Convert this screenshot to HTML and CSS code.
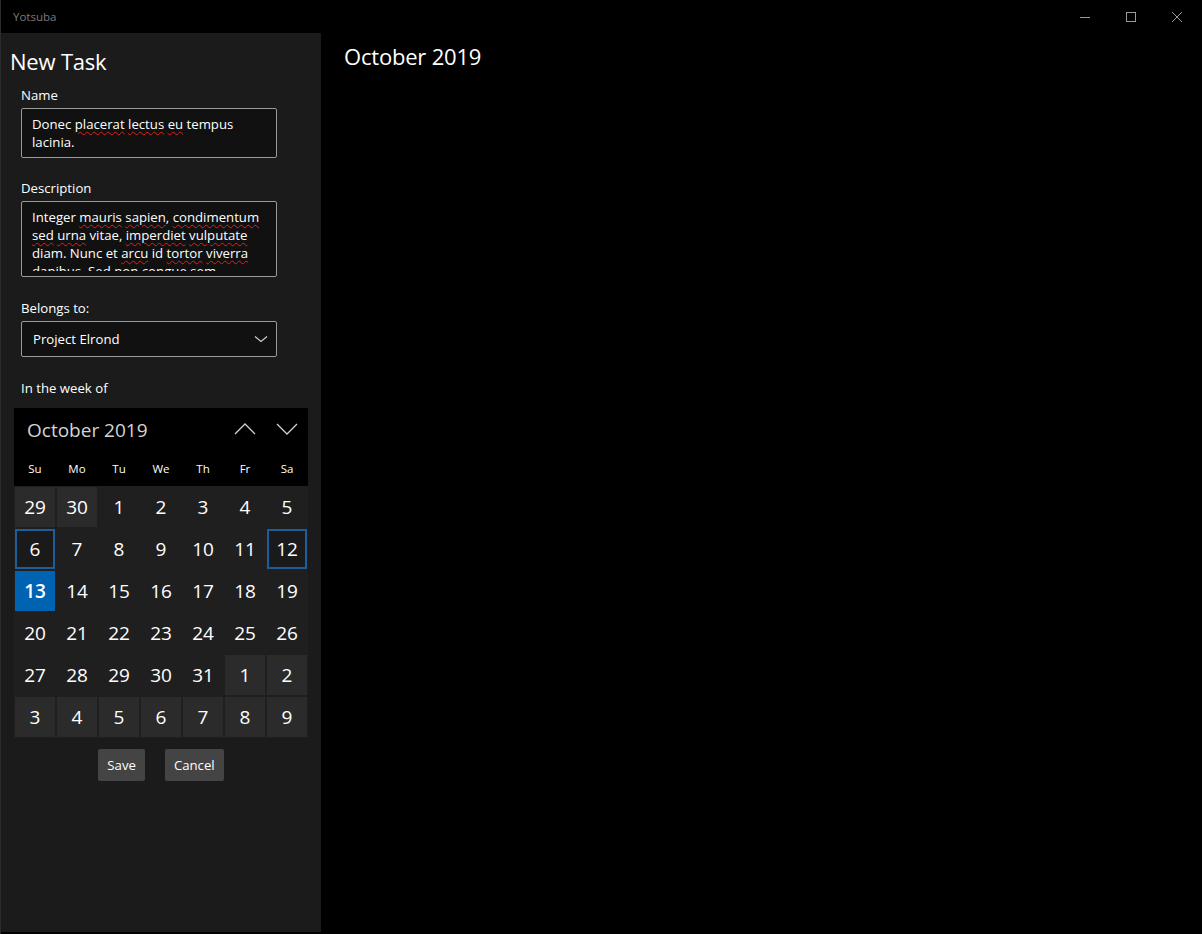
FILE: index.html
```html
<!DOCTYPE html>
<html lang="en">
<head>
<meta charset="utf-8">
<title>Yotsuba</title>
<link rel="stylesheet" href="styles.css">
</head>
<body>
<div class="window">
  <header class="titlebar">
    <span class="app-title">Yotsuba</span>
    <div class="controls">
      <span class="ctl"><svg width="12" height="12" viewBox="0 0 12 12"><path d="M1 6.5H11" stroke="#9a9a9a" stroke-width="1"/></svg></span>
      <span class="ctl"><svg width="12" height="12" viewBox="0 0 12 12"><rect x="1.5" y="1.5" width="9" height="9" fill="none" stroke="#9a9a9a" stroke-width="1"/></svg></span>
      <span class="ctl"><svg width="12" height="12" viewBox="0 0 12 12"><path d="M1 1L11 11M11 1L1 11" stroke="#9a9a9a" stroke-width="1"/></svg></span>
    </div>
  </header>
  <div class="main">
    <aside class="sidebar">
      <h1 class="page-title">New Task</h1>

      <div class="field">
        <div class="label">Name</div>
        <div class="textbox name-box"><div class="textbox-inner">Donec <span class="sp">placerat</span> <span class="sp">lectus</span> <span class="sp">eu</span> tempus lacinia.</div></div>
      </div>

      <div class="field">
        <div class="label">Description</div>
        <div class="textbox desc-box"><div class="textbox-inner">Integer <span class="sp">mauris</span> <span class="sp">sapien</span>, <span class="sp">condimentum</span> <span class="sp">sed</span> <span class="sp">urna</span> vitae, <span class="sp">imperdiet</span> <span class="sp">vulputate</span> diam. Nunc et <span class="sp">arcu</span> id <span class="sp">tortor</span> <span class="sp">viverra</span> <span class="sp">dapibus</span>. Sed non <span class="sp">congue</span> sem. Nullam tincidunt.</div></div>
      </div>

      <div class="field">
        <div class="label">Belongs to:</div>
        <div class="combo">
          <span>Project Elrond</span>
          <svg class="combo-chev" width="14" height="8" viewBox="0 0 14 8"><path d="M1 1.5L7 6.5L13 1.5" fill="none" stroke="#cfcfcf" stroke-width="1.2"/></svg>
        </div>
      </div>

      <div class="field">
        <div class="label">In the week of</div>
      </div>

      <div class="calendar">
        <div class="cal-head">
          <div class="cal-month">October 2019</div>
          <div class="cal-nav"><svg width="22" height="12" viewBox="0 0 22 12"><path d="M1 11L11 1L21 11" fill="none" stroke="#d0d0d0" stroke-width="1.3"/></svg></div>
          <div class="cal-nav"><svg width="22" height="12" viewBox="0 0 22 12"><path d="M1 1L11 11L21 1" fill="none" stroke="#d0d0d0" stroke-width="1.3"/></svg></div>
        </div>
        <div class="cal-days">
          <span>Su</span><span>Mo</span><span>Tu</span><span>We</span><span>Th</span><span>Fr</span><span>Sa</span>
        </div>
        <div class="cal-grid">
          <span class="day out">29</span><span class="day out">30</span><span class="day">1</span><span class="day">2</span><span class="day">3</span><span class="day">4</span><span class="day">5</span>
          <span class="day week">6</span><span class="day">7</span><span class="day">8</span><span class="day">9</span><span class="day">10</span><span class="day">11</span><span class="day week">12</span>
          <span class="day selected">13</span><span class="day">14</span><span class="day">15</span><span class="day">16</span><span class="day">17</span><span class="day">18</span><span class="day">19</span>
          <span class="day">20</span><span class="day">21</span><span class="day">22</span><span class="day">23</span><span class="day">24</span><span class="day">25</span><span class="day">26</span>
          <span class="day">27</span><span class="day">28</span><span class="day">29</span><span class="day">30</span><span class="day">31</span><span class="day out">1</span><span class="day out">2</span>
          <span class="day out">3</span><span class="day out">4</span><span class="day out">5</span><span class="day out">6</span><span class="day out">7</span><span class="day out">8</span><span class="day out">9</span>
        </div>
      </div>

      <div class="actions">
        <button class="btn btn-save">Save</button>
        <button class="btn btn-cancel">Cancel</button>
      </div>
    </aside>
    <section class="content">
      <h2 class="content-title">October 2019</h2>
    </section>
  </div>
</div>
</body>
</html>
```

FILE: styles.css
```css
* { box-sizing: border-box; }

html, body {
  margin: 0;
  padding: 0;
  height: 100%;
  background: #000;
}

body {
  font-family: "Segoe UI", "Open Sans", "Noto Sans", sans-serif;
  color: #fff;
  font-size: 13.2px;
}

.window {
  height: 934px;
  display: flex;
  flex-direction: column;
  border-left: 1px solid #2c2c2c;
  background: #000;
}

.titlebar {
  height: 33px;
  flex: 0 0 33px;
  display: flex;
  align-items: center;
  justify-content: space-between;
  background: #000;
}

.app-title {
  margin-left: 12px;
  font-size: 11.5px;
  color: #7a7a7a;
  margin-top: -1px;
}

.controls {
  display: flex;
  height: 33px;
  align-items: center;
  margin-right: 2px;
}

.ctl {
  width: 46px;
  height: 33px;
  display: flex;
  align-items: center;
  justify-content: center;
}

.ctl svg { display: block; }

.main {
  flex: 1;
  display: flex;
  min-height: 0;
}

.sidebar {
  width: 320px;
  flex: 0 0 320px;
  background: #1b1b1b;
  padding: 12px 0 0 20px;
  margin-bottom: 2px;
}

.page-title {
  margin: 0 0 8px -11px;
  font-size: 22px;
  font-weight: 400;
  line-height: 32px;
  height: 32px;
  letter-spacing: -0.2px;
}

.field {
  margin-bottom: 20px;
}

.label {
  font-size: 13.2px;
  line-height: 20px;
  height: 20px;
  margin-bottom: 3px;
  color: #fff;
}

.textbox {
  width: 256px;
  border: 1px solid #9a9a9a;
  border-radius: 2px;
  background: #111;
  padding: 6px 10px;
  font-size: 13.2px;
  line-height: 18px;
}

.name-box { height: 50px; }

.desc-box { height: 76px; }

.desc-box .textbox-inner {
  height: 63px;
  overflow: hidden;
}

.sp {
  text-decoration: underline wavy #e0201b;
  text-decoration-thickness: 1px;
  text-underline-offset: 2px;
}

.combo {
  width: 256px;
  height: 36px;
  border: 1px solid #9a9a9a;
  border-radius: 2px;
  background: #111;
  display: flex;
  align-items: center;
  justify-content: space-between;
  padding: 0 8px 0 11px;
  font-size: 13.2px;
}

.combo-chev { display: block; }

.field:nth-of-type(4) { margin-bottom: 10px; }
.field:nth-of-type(3) { margin-bottom: 21px; }
.field:nth-of-type(2) { margin-bottom: 21px; }

.calendar {
  width: 294px;
  margin-left: -7px;
  background: #1f1f1f;
}

.cal-head {
  display: grid;
  grid-template-columns: 1fr 40px 40px;
  column-gap: 2px;
  padding: 0 1px 0 13px;
  height: 44px;
  align-items: center;
  background: #000;
}

.cal-month {
  font-size: 19px;
  color: #d4d4d4;
  line-height: 44px;
}

.cal-nav {
  display: flex;
  align-items: center;
  justify-content: center;
  height: 44px;
  padding-bottom: 3px;
}

.cal-days {
  display: grid;
  grid-template-columns: repeat(7, 40px);
  column-gap: 2px;
  padding: 0 1px;
  height: 34px;
  align-items: center;
  background: #000;
  font-size: 11.5px;
  text-align: center;
  padding-bottom: 1px;
}

.cal-grid {
  display: grid;
  grid-template-columns: repeat(7, 40px);
  grid-auto-rows: 40px;
  gap: 2px;
  padding: 1px;
}

.day {
  display: flex;
  align-items: center;
  justify-content: center;
  font-size: 19px;
  color: #fff;
}

.day.out { background: #2b2b2b; }

.day.week {
  border: 2px solid #1d5d9b;
  background: #1a1a1a;
}

.day.selected {
  background: #0063b1;
  font-weight: 600;
}

.actions {
  display: flex;
  justify-content: center;
  gap: 20px;
  margin-top: 11px;
  margin-left: -20px;
}

.btn {
  height: 32px;
  border: none;
  border-radius: 2px;
  background: #444;
  color: #fff;
  font-family: inherit;
  font-size: 13.2px;
  padding: 0 9px;
}

.content {
  flex: 1;
  padding: 7px 0 0 23px;
  background: #000;
}

.content-title {
  margin: 0;
  font-size: 22px;
  font-weight: 400;
  line-height: 32px;
  color: #fff;
  letter-spacing: -0.2px;
}
```
